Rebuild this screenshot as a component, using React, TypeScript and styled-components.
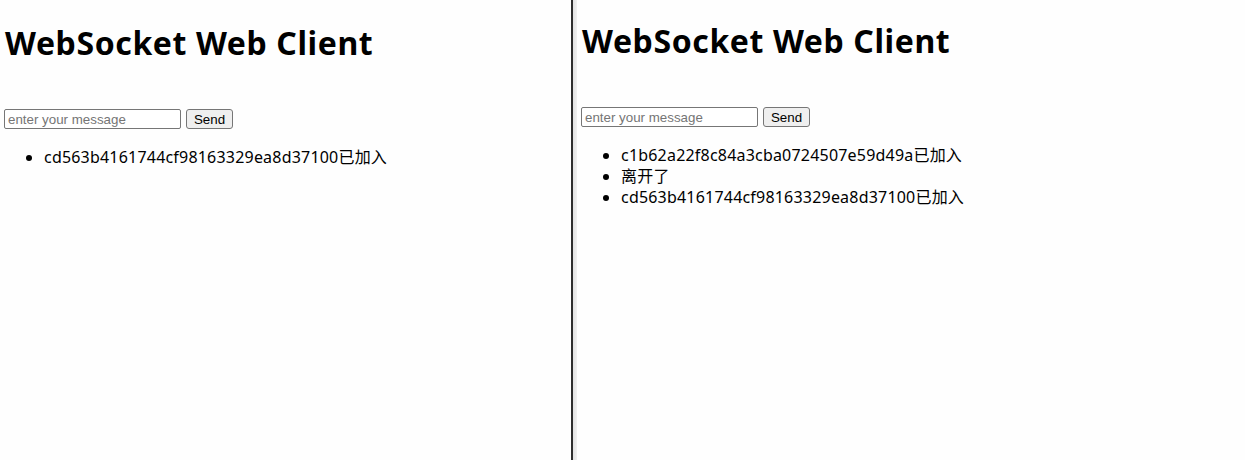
import React from "react";
import styled, { createGlobalStyle } from "styled-components";

const GlobalStyle = createGlobalStyle`
  html, body {
    margin: 0;
    padding: 0;
    background: #fefefe;
  }
  #root {
    height: 460px;
  }
`;

const Screen = styled.div`
  display: flex;
  height: 460px;
  width: 1245px;
  overflow: hidden;
  background: #fefefe;
`;

const Pane = styled.div<{ $top: number; $width?: number }>`
  box-sizing: border-box;
  ${(p) => (p.$width ? `width: ${p.$width}px; flex: none;` : "flex: 1;")}
  padding: ${(p) => p.$top}px 0 0 4px;
  color: #000;
  font-family: "Noto Sans", "Noto Sans CJK SC", sans-serif;
`;

const Divider = styled.div`
  flex: none;
  width: 6px;
  display: flex;
`;

const DividerLine = styled.div`
  width: 2px;
  background: #2e2e2e;
`;

const DividerShade = styled.div`
  flex: 1;
  background: linear-gradient(to right, #e2e2e2, #f0f0f0);
`;

const Title = styled.h1`
  margin: 0 0 0 1px;
  font-size: 32px;
  line-height: 44px;
  font-weight: 700;
  letter-spacing: 0.6px;
  white-space: nowrap;
`;

const Form = styled.div`
  display: flex;
  align-items: center;
  gap: 5px;
  margin-top: 44px;
`;

const MessageInput = styled.input`
  box-sizing: border-box;
  width: 177px;
  height: 20px;
  padding: 1px 3px;
  border: 1px solid #767676;
  border-radius: 2px;
  background: #fff;
  font-family: "Liberation Sans", Arial, sans-serif;
  font-size: 13.33px;
  color: #000;
  outline: none;
  &::placeholder {
    color: #757575;
  }
`;

const SendButton = styled.button`
  box-sizing: border-box;
  height: 20px;
  width: 47px;
  padding: 0 6px;
  border: 1px solid #767676;
  border-radius: 3px;
  background: #efefef;
  font-family: "Liberation Sans", Arial, sans-serif;
  font-size: 13.33px;
  color: #000;
`;

const MessageList = styled.ul`
  margin: 18px 0 0;
  padding-left: 40px;
  list-style: disc;
  font-size: 16px;
  line-height: 21px;
  letter-spacing: 0.2px;
`;

const Message = styled.li`
  white-space: nowrap;
`;

type ClientProps = { top: number; width?: number; messages: string[] };

function Client({ top, width, messages }: ClientProps) {
  return (
    <Pane $top={top} $width={width}>
      <Title>WebSocket Web Client</Title>
      <Form>
        <MessageInput placeholder="enter your message" />
        <SendButton>Send</SendButton>
      </Form>
      <MessageList>
        {messages.map((m, i) => (
          <Message key={i}>{m}</Message>
        ))}
      </MessageList>
    </Pane>
  );
}

export default function App() {
  return (
    <>
      <GlobalStyle />
      <Screen>
        <Client
          top={21}
          width={571}
          messages={["cd563b4161744cf98163329ea8d37100已加入"]}
        />
        <Divider>
          <DividerLine />
          <DividerShade />
        </Divider>
        <Client
          top={19}
          messages={[
            "c1b62a22f8c84a3cba0724507e59d49a已加入",
            "离开了",
            "cd563b4161744cf98163329ea8d37100已加入",
          ]}
        />
      </Screen>
    </>
  );
}
